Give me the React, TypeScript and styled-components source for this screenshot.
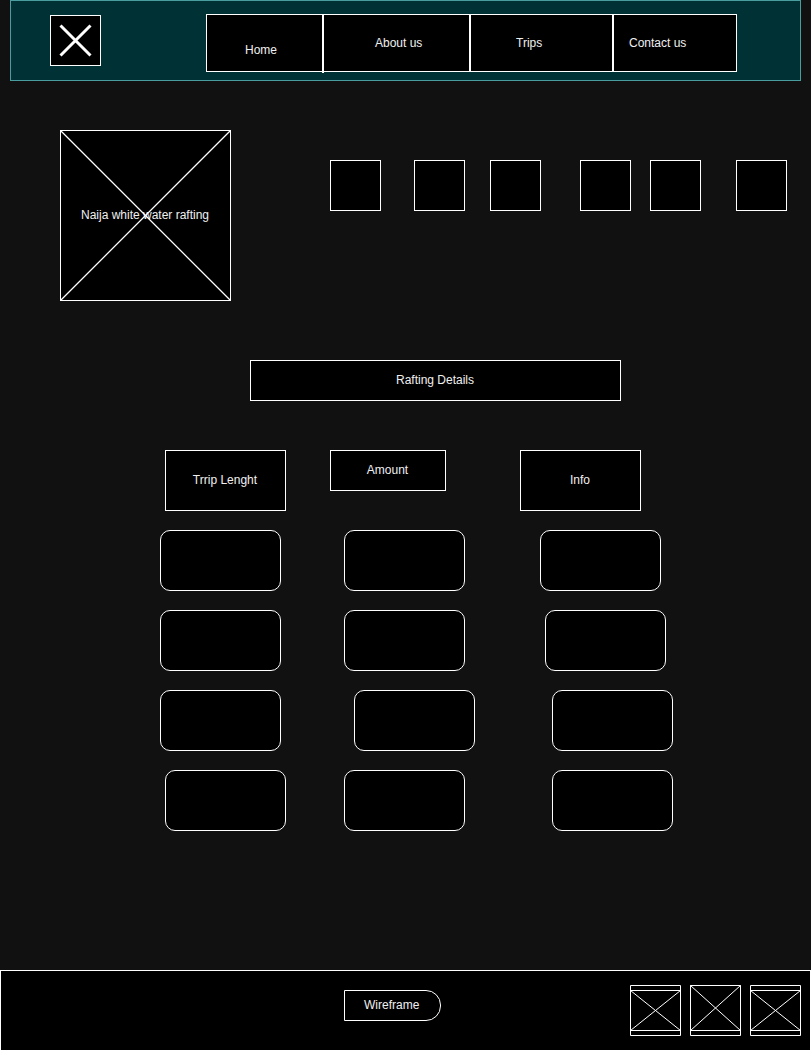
import React from "react";
import styled, { createGlobalStyle } from "styled-components";

const GlobalStyle = createGlobalStyle`
  *, *::before, *::after { box-sizing: border-box; }
  body {
    margin: 0;
    background: #111111;
    color: #f0f0f0;
    font-family: "Liberation Sans", Arial, sans-serif;
    font-size: 12px;
    line-height: 14px;
  }
`;

const Page = styled.div`
  display: flex;
  flex-direction: column;
  min-height: 100vh;
`;

const Header = styled.header`
  display: flex;
  align-items: flex-start;
  height: 81px;
  margin: 0 10px;
  padding: 13px 63px 0 39px;
  background: #003134;
  border: 1px solid #4a9d9f;
`;

const Logo = styled.a`
  display: block;
  width: 51px;
  height: 51px;
  margin: 1px 105px 0 0;
  background: #000;
  border: 1px solid #fff;

  svg { display: block; }
`;

const Nav = styled.nav`
  flex: 1;
  display: grid;
  grid-template-columns: 115fr 147fr 143fr 124fr;
  height: 58px;
  background: #000;
  border: 1px solid #fff;
`;

const NavLink = styled.a<{ $padding: string }>`
  padding: ${(p) => p.$padding};
  color: inherit;
  text-decoration: none;
  white-space: nowrap;

  & + & { border-left: 2px solid #fff; }
  &:nth-child(2) { margin-bottom: -2px; }
`;

const Main = styled.main`
  flex: 1;
  padding-bottom: 120px;
`;

const Hero = styled.section`
  display: flex;
  align-items: flex-start;
  padding: 49px 24px 0 60px;
`;

const Picture = styled.figure`
  display: grid;
  width: 171px;
  height: 171px;
  margin: 0 99px 0 0;
  background: #000;
  border: 1px solid #fff;

  svg, figcaption { grid-area: 1 / 1; }
  figcaption { place-self: center; padding: 0 1px 2px 0; }
`;

const Thumbs = styled.div`
  flex: 1;
  display: grid;
  grid-template-columns: 84fr 76fr 90fr 70fr 86fr 51px;
  margin-top: 30px;
`;

const Thumb = styled.div`
  width: 51px;
  height: 51px;
  background: #000;
  border: 1px solid #fff;
`;

const Title = styled.h1`
  height: 41px;
  margin: 59px 190px 49px 250px;
  padding: 12px 1px 0 0;
  background: #000;
  border: 1px solid #fff;
  font-size: 12px;
  font-weight: 400;
  text-align: center;
`;

const Details = styled.table`
  width: calc(100% - 298px);
  margin-left: 160px;
  border-collapse: collapse;
  table-layout: fixed;

  th, td {
    padding: 0 0 19px;
    font-weight: 400;
    text-align: left;
    vertical-align: top;
  }
`;

const Column = styled.col<{ $width?: string }>`
  width: ${(p) => p.$width ?? "auto"};
`;

const Heading = styled.div<{ $indent: number; $compact?: boolean }>`
  display: flex;
  align-items: center;
  justify-content: center;
  width: ${(p) => (p.$compact ? 116 : 121)}px;
  height: ${(p) => (p.$compact ? 41 : 61)}px;
  margin-left: ${(p) => p.$indent}px;
  padding: 0 1px 2px 0;
  background: #000;
  border: 1px solid #fff;
`;

const Slot = styled.div<{ $indent: number }>`
  width: 121px;
  height: 61px;
  margin-left: ${(p) => p.$indent}px;
  background: #000;
  border: 1px solid #fff;
  border-radius: 10px;
`;

const Footer = styled.footer`
  display: grid;
  grid-template-columns: 1fr auto 1fr;
  align-items: start;
  height: 81px;
  padding: 14px 9px 0;
  background: #000;
  border: 1px solid #fff;
`;

const Tag = styled.p`
  grid-column: 2;
  width: 97px;
  height: 31px;
  margin: 5px 26px 0 0;
  padding: 7px 0 0 19px;
  border: 1px solid #fff;
  border-radius: 0 15px 15px 0;
`;

const Social = styled.div`
  display: flex;
  justify-content: flex-end;
  gap: 9px;

  svg { display: block; }
`;

const pages = [
  { name: "Home", padding: "28px 0 0 38px" },
  { name: "About us", padding: "21px 0 0 51px" },
  { name: "Trips", padding: "21px 0 0 45px" },
  { name: "Contact us", padding: "21px 0 0 15px" },
];

const rows = [
  [0, 14, 20],
  [0, 14, 25],
  [0, 24, 32],
  [5, 14, 32],
];

function Placeholder({ top }: { top: number }) {
  return (
    <svg width="51" height="51" viewBox="0 0 51 51" fill="none" stroke="#fff" aria-hidden="true">
      <path d="M.5 .5H50.5V50.5H.5Z" />
      <path d={`M.5 ${top}H50.5M.5 45.5H50.5M.5 ${top}L50.5 45.5M50.5 ${top}L.5 45.5`} />
    </svg>
  );
}

export default function App() {
  return (
    <>
      <GlobalStyle />
      <Page>
        <Header>
          <Logo href="#" aria-label="Start page">
            <svg width="49" height="49" viewBox="0 0 49 49" stroke="#fff" strokeWidth="3" aria-hidden="true">
              <path d="M9.5 9.5L39.5 39.5M39.5 9.5L9.5 39.5" />
            </svg>
          </Logo>
          <Nav>
            {pages.map((page) => (
              <NavLink key={page.name} href="#" $padding={page.padding}>
                {page.name}
              </NavLink>
            ))}
          </Nav>
        </Header>
        <Main>
          <Hero>
            <Picture>
              <figcaption>Naija white water rafting</figcaption>
              <svg width="169" height="169" viewBox="0 0 169 169" stroke="#fff" strokeWidth="1.3" aria-hidden="true">
                <path d="M0 0L169 169M169 0L0 169" />
              </svg>
            </Picture>
            <Thumbs>
              {[1, 2, 3, 4, 5, 6].map((n) => (
                <Thumb key={n} />
              ))}
            </Thumbs>
          </Hero>
          <Title>Rafting Details</Title>
          <Details>
            <colgroup>
              <Column $width="33.14%" />
              <Column $width="37.04%" />
              <Column />
            </colgroup>
            <thead>
              <tr>
                <th scope="col"><Heading $indent={5}>Trrip Lenght</Heading></th>
                <th scope="col"><Heading $indent={0} $compact>Amount</Heading></th>
                <th scope="col"><Heading $indent={0}>Info</Heading></th>
              </tr>
            </thead>
            <tbody>
              {rows.map((row, r) => (
                <tr key={r}>
                  {row.map((indent, c) => (
                    <td key={c}><Slot $indent={indent} /></td>
                  ))}
                </tr>
              ))}
            </tbody>
          </Details>
        </Main>
        <Footer>
          <Tag>Wireframe</Tag>
          <Social>
            <Placeholder top={5.5} />
            <Placeholder top={0.5} />
            <Placeholder top={5.5} />
          </Social>
        </Footer>
      </Page>
    </>
  );
}
